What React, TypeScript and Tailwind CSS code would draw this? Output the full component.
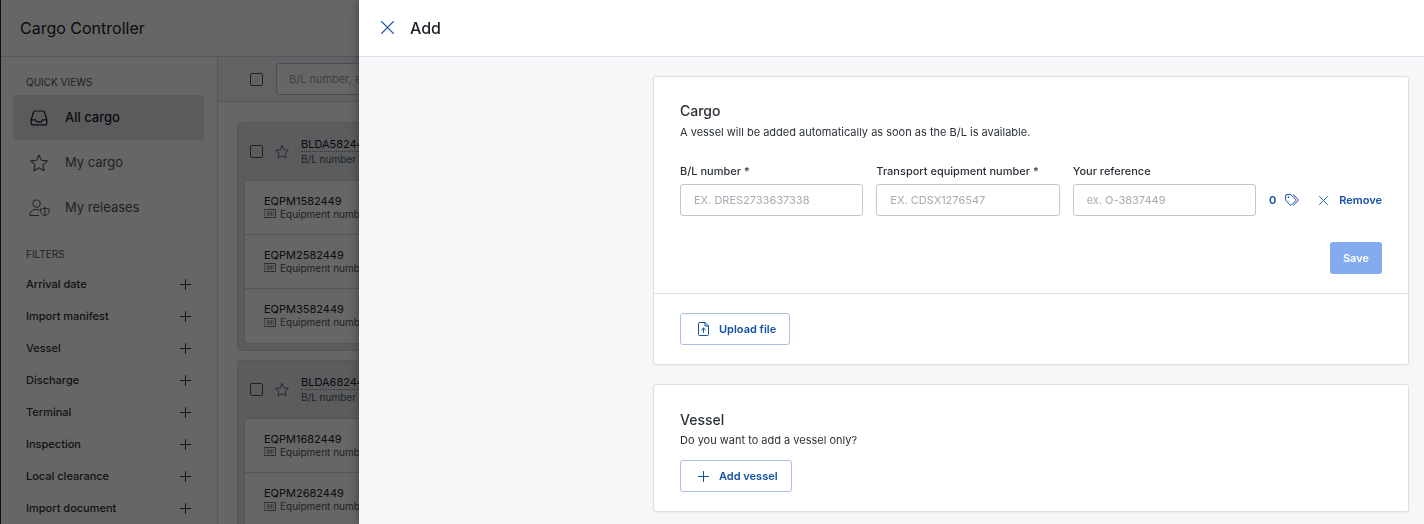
import { useState } from "react";
import type { ReactNode } from "react";

const filters = [
    "Arrival date",
    "Import manifest",
    "Vessel",
    "Discharge",
    "Terminal",
    "Inspection",
    "Local clearance",
    "Import document",
];

const shipments = [
    { bl: "BLDA582449", equipment: ["EQPM1582449", "EQPM2582449", "EQPM3582449"] },
    { bl: "BLDA682449", equipment: ["EQPM1682449", "EQPM2682449"] },
];

const fields = [
    { id: "bl-number", label: "B/L number *", placeholder: "EX. DRES2733637338" },
    { id: "equipment-number", label: "Transport equipment number *", placeholder: "EX. CDSX1276547" },
    { id: "reference", label: "Your reference", placeholder: "ex. O-3837449" },
];

type IconProps = { children: ReactNode; className?: string; viewBox?: string };

function Icon({ children, className = "size-4", viewBox = "0 0 16 16" }: IconProps) {
    return (
        <svg
            viewBox={viewBox}
            className={`shrink-0 ${className}`}
            fill="none"
            stroke="currentColor"
            strokeLinecap="round"
            strokeLinejoin="round"
            aria-hidden="true"
        >
            {children}
        </svg>
    );
}

function StarIcon({ className = "size-4" }: { className?: string }) {
    return (
        <Icon className={className}>
            <path d="M8 .8l2.200 4.700 5.100.6-3.800 3.500 1 5.200L8 12.200l-4.500 2.600 1-5.200L.7 6.100l5.100-.6z" />
        </Icon>
    );
}

function InboxIcon() {
    return (
        <Icon className="size-[18px]" viewBox="0 0 18 18">
            <path
                strokeWidth="1.200"
                d="M4.800 2h8.400a1.200 1.200 0 0 1 1.200 1l2.400 7.500v4a1.400 1.400 0 0 1-1.400 1.400H2.600a1.400 1.400 0 0 1-1.400-1.400v-4L3.600 3a1.200 1.200 0 0 1 1.200-1zM1.200 10.800H5.500l1.300 2h4.400l1.300-2h4.300"
            />
        </Icon>
    );
}

function UserShieldIcon() {
    return (
        <Icon className="h-[18px] w-[21px]" viewBox="0 0 21 18">
            <circle cx="7.500" cy="4.600" r="3.700" />
            <path d="M9.500 16.500H.8c0-3.600 2.700-6 6.700-6 1 0 1.900.1 2.700.4" />
            <path d="M15.800 8.800c1.400.8 2.800 1.200 4.400 1.200.2 3.600-1.200 5.800-4.400 6.800-3.200-1-4.600-3.200-4.400-6.800 1.600 0 3-.4 4.400-1.200zM15.800 8.800v8" />
        </Icon>
    );
}

function BarcodeIcon() {
    return (
        <Icon className="h-[9px] w-3" viewBox="0 0 12 9">
            <path strokeWidth=".8" d="M.5.5h11v8H.5z" />
            <path strokeWidth=".6" d="M3 2.500v4M4.500 2.500v4M6 2.500v4M7.500 2.500v4M9 2.500v4" />
        </Icon>
    );
}

function PlusIcon() {
    return (
        <Icon className="size-[11px]" viewBox="0 0 11 11">
            <path d="M5.500.5v10M.5 5.500h10" />
        </Icon>
    );
}

function CloseIcon({ className }: { className: string }) {
    return (
        <Icon className={className} viewBox="0 0 12 12">
            <path strokeWidth="1.200" d="M.6.6l10.800 10.800M11.400.6L.6 11.400" />
        </Icon>
    );
}

function TagsIcon() {
    return (
        <Icon className="h-3 w-[14px]" viewBox="0 0 14 12">
            <path d="M1.500.6h4.300l4.900 4.700a1 1 0 0 1 0 1.400L6.500 11a1 1 0 0 1-1.400 0L.6 6V1.500a.9.9 0 0 1 .9-.9zM8.300.7l4.700 4.600a1 1 0 0 1 0 1.400l-4.600 4.600" />
            <circle cx="3.300" cy="3.200" r=".4" />
        </Icon>
    );
}

function UploadIcon() {
    return (
        <Icon className="h-[14px] w-[11px]" viewBox="0 0 11 14">
            <path d="M1.500.5H7l3.500 3.500v8.500a1 1 0 0 1-1 1h-8a1 1 0 0 1-1-1v-11a1 1 0 0 1 1-1zM7 .5V4h3.500M5.500 10.500V6M3.500 8l2-2 2 2" />
        </Icon>
    );
}

function NavItem({ icon, label, active }: { icon: ReactNode; label: string; active?: boolean }) {
    return (
        <a
            href="#"
            aria-current={active ? "page" : undefined}
            className={`flex h-[45px] items-center gap-4 rounded-sm pl-4 text-[13px] ${
                active ? "bg-[#dfe3e8] font-medium text-[#1c2126]" : "text-[#4f565e]"
            }`}
        >
            <span className="flex w-5 justify-center">{icon}</span>
            {label}
        </a>
    );
}

function Sidebar() {
    return (
        <aside className="w-[217px] shrink-0 border-r border-[#d3d8de] pt-[19px] pr-[13px] pl-3">
            <h2 className="pl-[13px] text-[10px] leading-3 text-[#4f565e]">QUICK VIEWS</h2>
            <nav className="mt-[7px]">
                <NavItem icon={<InboxIcon />} label="All cargo" active />
                <NavItem icon={<StarIcon className="size-[18px]" />} label="My cargo" />
                <NavItem icon={<UserShieldIcon />} label="My releases" />
            </nav>
            <h2 className="mt-[18px] pl-[13px] text-[10px] leading-3 text-[#4f565e]">FILTERS</h2>
            <div className="mt-2">
                {filters.map((filter) => (
                    <button
                        key={filter}
                        type="button"
                        className="flex h-8 w-full items-center justify-between px-[13px] text-[11px] font-medium text-[#2b3137]"
                    >
                        {filter}
                        <PlusIcon />
                    </button>
                ))}
            </div>
        </aside>
    );
}

function Checkbox({ label }: { label: string }) {
    return (
        <input
            type="checkbox"
            aria-label={label}
            className="size-[13px] shrink-0 appearance-none rounded-[2px] border border-[#4f565e]"
        />
    );
}

function ShipmentCard({ bl, equipment }: { bl: string; equipment: string[] }) {
    return (
        <section className="rounded-sm border border-[#d3d8de] bg-[#e2e6eb] px-[6px] pb-[6px]">
            <div className="flex h-[57px] items-center gap-3 pl-[6px] text-[#4f565e]">
                <Checkbox label={bl} />
                <StarIcon className="size-[14px]" />
                <div>
                    <a
                        href="#"
                        className="block border-b border-dotted border-[#7b838b] text-[11px] leading-[14px] text-[#1c2126]"
                    >
                        {bl}
                    </a>
                    <p className="text-[10px] leading-[14px]">B/L number</p>
                </div>
            </div>
            <ul className="divide-y divide-[#cfd4da] rounded-sm border border-[#d3d8de] bg-white">
                {equipment.map((number) => (
                    <li key={number} className="flex h-[54px] flex-col justify-center pb-[2px] pl-[19px]">
                        <p className="text-[11px] leading-[14px] text-[#1c2126]">{number}</p>
                        <p className="flex items-center gap-1 text-[10px] leading-3 text-[#4f565e]">
                            <BarcodeIcon />
                            Equipment number
                        </p>
                    </li>
                ))}
            </ul>
        </section>
    );
}

function CargoPage() {
    return (
        <div className="flex h-full flex-col border-l border-[#0a2a66] bg-white">
            <header className="flex h-[57px] shrink-0 items-center border-b border-[#d3d8de] pb-px pl-[19px]">
                <h1 className="text-base text-[#1c2126]">Cargo Controller</h1>
            </header>
            <div className="flex min-h-0 flex-1">
                <Sidebar />
                <main className="min-w-0 flex-1 overflow-hidden">
                    <div className="flex h-[45px] items-center gap-[13px] border-b border-[#d3d8de] bg-[#f1f4f8] pl-8">
                        <Checkbox label="Select all cargo" />
                        <input
                            type="search"
                            aria-label="Search cargo"
                            placeholder="B/L number, equipment number"
                            className="h-8 w-80 rounded-[3px] border border-[#b9c0c8] bg-white px-3 text-[11px] placeholder:text-[#9aa2ab]"
                        />
                    </div>
                    <div className="flex flex-col gap-[9px] pt-5 pr-5 pl-[19px]">
                        {shipments.map((shipment) => (
                            <ShipmentCard key={shipment.bl} {...shipment} />
                        ))}
                    </div>
                </main>
            </div>
        </div>
    );
}

function OutlineButton({ icon, children }: { icon: ReactNode; children: ReactNode }) {
    return (
        <button
            type="button"
            className="flex h-8 items-center gap-[9px] rounded-[3px] border border-[#a9bfe6] pr-[13px] pl-4 text-[11px] font-semibold text-[#1450a8]"
        >
            <span className="flex w-[13px] justify-center">{icon}</span>
            {children}
        </button>
    );
}

function AddDrawer({ onClose }: { onClose: () => void }) {
    return (
        <div className="fixed inset-0 flex">
            <div className="w-[359px] shrink-0 bg-black/60" onClick={onClose} />
            <section
                role="dialog"
                aria-label="Add"
                className="flex min-w-0 flex-1 flex-col bg-[#f6f7f9] shadow-[0_0_10px_rgba(0,0,0,0.4)]"
            >
                <header className="flex h-[57px] shrink-0 items-center gap-4 border-b border-[#dcdfe3] bg-white pb-px pl-[22px]">
                    <button type="button" aria-label="Close" onClick={onClose} className="text-[#1450a8]">
                        <CloseIcon className="size-[13px]" />
                    </button>
                    <h2 className="text-base font-medium text-[#1c2126]">Add</h2>
                </header>
                <div className="min-h-0 flex-1 overflow-hidden pt-[19px] pr-[15px]">
                    <div className="ml-auto flex max-w-[756px] flex-col gap-[19px]">
                        <form
                            className="rounded-[3px] border border-[#dcdfe3] bg-white shadow-xs"
                            onSubmit={(e) => e.preventDefault()}
                        >
                            <div className="px-[26px] pt-6 pb-[19px]">
                                <h3 className="text-sm font-medium text-[#2b3137]">Cargo</h3>
                                <p className="text-[11px] leading-[22px] text-[#2b3137]">
                                    A vessel will be added automatically as soon as the B/L is available.
                                </p>
                                <div className="mt-5 flex items-end gap-[13px]">
                                    {fields.map((field) => (
                                        <div key={field.id} className="min-w-0 flex-1">
                                            <label
                                                htmlFor={field.id}
                                                className="block text-[11px] leading-4 font-medium whitespace-nowrap text-[#2b3137]"
                                            >
                                                {field.label}
                                            </label>
                                            <input
                                                id={field.id}
                                                type="text"
                                                placeholder={field.placeholder}
                                                className="mt-[5px] h-8 w-full rounded-[3px] border border-[#c3c8ce] px-[13px] text-[11px] placeholder:text-[#a3abb4]"
                                            />
                                        </div>
                                    ))}
                                    <div className="flex h-8 items-center gap-5 text-[11px] font-semibold text-[#1450a8]">
                                        <button type="button" aria-label="0 tags" className="flex items-center gap-[9px]">
                                            0
                                            <TagsIcon />
                                        </button>
                                        <button type="button" className="flex items-center gap-[11px]">
                                            <CloseIcon className="size-[9px]" />
                                            Remove
                                        </button>
                                    </div>
                                </div>
                                <div className="mt-[26px] flex justify-end">
                                    <button
                                        type="submit"
                                        className="h-8 rounded-[3px] bg-[#84abee] px-[13px] text-[11px] font-semibold text-white"
                                    >
                                        Save
                                    </button>
                                </div>
                            </div>
                            <div className="flex border-t border-[#dcdfe3] px-[26px] py-[19px]">
                                <OutlineButton icon={<UploadIcon />}>Upload file</OutlineButton>
                            </div>
                        </form>
                        <section className="rounded-[3px] border border-[#dcdfe3] bg-white px-[26px] pt-[25px] pb-[19px] shadow-xs">
                            <h3 className="text-sm font-medium text-[#2b3137]">Vessel</h3>
                            <p className="mb-[10px] text-[11px] leading-5 text-[#2b3137]">
                                Do you want to add a vessel only?
                            </p>
                            <div className="flex">
                                <OutlineButton icon={<PlusIcon />}>Add vessel</OutlineButton>
                            </div>
                        </section>
                    </div>
                </div>
            </section>
        </div>
    );
}

export default function App() {
    const [open, setOpen] = useState(true);

    return (
        <div className="h-screen overflow-hidden font-['Inter','Liberation_Sans',sans-serif]">
            <CargoPage />
            {open && <AddDrawer onClose={() => setOpen(false)} />}
        </div>
    );
}
